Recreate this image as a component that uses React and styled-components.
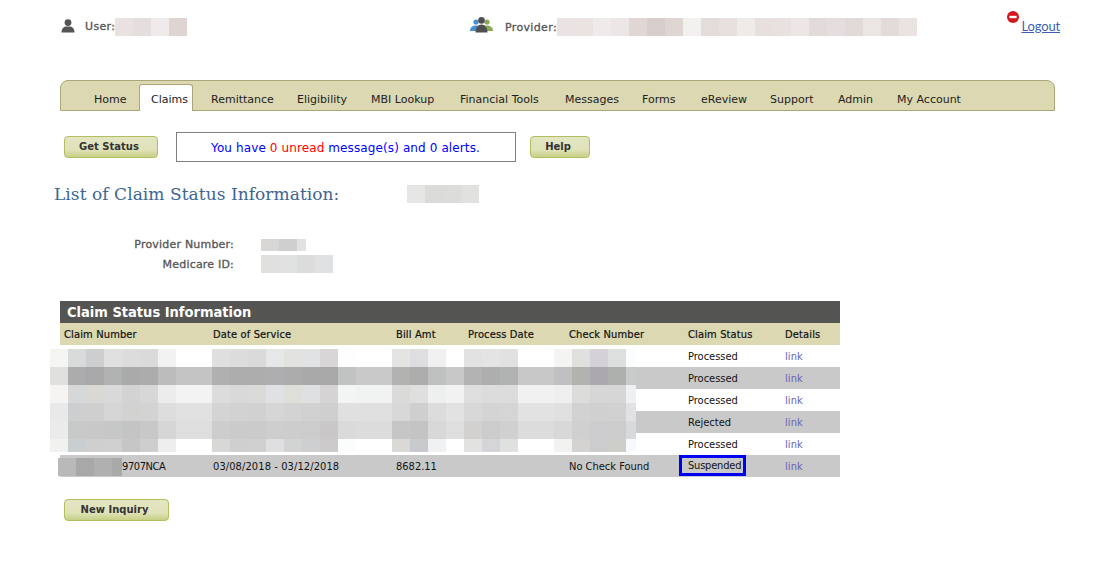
import React from "react";
import styled, { createGlobalStyle } from "styled-components";

const GlobalStyle = createGlobalStyle`
  html, body {
    margin: 0;
    padding: 0;
    background: #fff;
  }
  body {
    font-family: "DejaVu Sans", Verdana, sans-serif;
    font-size: 11px;
    color: #222;
  }
`;

const n = null;

const tabs = [
  { label: "Home", w: 57 },
  { label: "Claims", w: 54, active: true },
  { label: "Remittance", w: 86 },
  { label: "Eligibility", w: 74 },
  { label: "MBI Lookup", w: 89 },
  { label: "Financial Tools", w: 105 },
  { label: "Messages", w: 77 },
  { label: "Forms", w: 59 },
  { label: "eReview", w: 69 },
  { label: "Support", w: 68 },
  { label: "Admin", w: 59 },
  { label: "My Account", w: 90 },
];

const claims = [
  { status: "Processed" },
  { status: "Processed" },
  { status: "Processed" },
  { status: "Rejected" },
  { status: "Processed" },
  { number: "9707NCA", dates: "03/08/2018 - 03/12/2018", amount: "8682.11", check: "No Check Found", status: "Suspended", flagged: true },
];

const mosaicRows = [
  ["#f5f5f4", "#d9dbdb", "#cdcecf", "#e0e0e0", "#dcdcdc", "#dadada", "#f2f2f2", n, n, "#dfdfdf", "#dcdcdc", "#dadada", "#e6e7e9", "#e2e3de", "#e0e2e4", "#d8d6d7", "#fdfefd", n, n, "#e4e4e2", "#dedee0", "#f0f0f0", n, "#e2e2e2", "#e4e4e4", "#e0e1e0", n, n, "#f4f4f3", "#e0e0df", "#d4d2d8", "#dcdfde", "#fafcfe"],
  ["#e0e0df", "#acacac", "#a8a8aa", "#b0b2b1", "#aaaaaa", "#acacac", "#bcbcbc", "#c4c4c4", "#c4c4c4", "#b0b0b0", "#adadad", "#adadad", "#aeaeb0", "#acacad", "#a9a9aa", "#a9a9a9", "#c0c3c2", "#c9c9c9", "#c9c9c9", "#b2b2b0", "#adadad", "#bfc1c0", "#c8c8c8", "#b3b3b3", "#aeaeae", "#b1b3b2", "#c8c8c8", "#c8c8c8", "#c0c0c0", "#b2b2af", "#aba9ae", "#aeb0ae", "#c8cacc"],
  ["#f5f4f3", "#d5d7d9", "#d9d8d5", "#d9d9d9", "#d3d3d3", "#d7d7d7", "#ececec", "#f3f3f3", "#f3f3f3", "#dcdcdc", "#d9d9d9", "#dadad8", "#e0e1e3", "#dedfd9", "#dfe0e2", "#d5d3d4", "#f3f5f5", "#f1f2f2", "#f1f2f2", "#dadad9", "#dfdfe0", "#eeefef", "#f2f2f2", "#dedede", "#dcdcdc", "#dbdcdb", "#f1f1f1", "#f1f1f1", "#efefef", "#dcdcda", "#d6d6d6", "#d6d6d6", "#eef1f3"],
  ["#e9e9e9", "#cdced0", "#cfcfcf", "#d5d5d5", "#d2d2d1", "#d3d3d3", "#dddddd", "#e1e1e1", "#e1e1e1", "#d4d4d4", "#d2d2d2", "#d1d1d1", "#d6d6d6", "#d3d3d3", "#d1d1d1", "#cfcfcf", "#e0e0e0", "#e0e0e0", "#e0e0e0", "#d8d8d8", "#cfcfcf", "#dcdcdc", "#e2e2e2", "#d8d8d8", "#d4d4d4", "#d5d5d5", "#e2e2e2", "#e2e2e2", "#e0e0e0", "#d2d2d2", "#d0d0d0", "#d1d1d1", "#e2e2e4"],
  ["#ebebeb", "#c8cac9", "#c8c8c8", "#c5c8c6", "#c4c4c4", "#c8c8c8", "#d6d6d6", "#dedede", "#dedede", "#cdcdcd", "#cbcbcb", "#cbcbcb", "#cecece", "#cdcdcd", "#cccccc", "#c9c7c8", "#dadada", "#dcdcdc", "#dcdcdc", "#c6c6c6", "#c4c4c4", "#d8d8d8", "#dedede", "#d2d1cf", "#cccccc", "#d0d0d0", "#dcdcdc", "#dcdcdc", "#d8d8d8", "#d0d0d0", "#ccccce", "#cccccc", "#d8d9db"],
  ["#f1f1f0", "#c9ced0", "#cfcfcf", "#d0d0d0", "#c6c6c6", "#cecece", "#eeeeee", n, n, "#d8d8d6", "#cfcfcf", "#d0d0d0", "#dfdfe1", "#d2d4d3", "#cecfd0", "#cccaca", "#fbfdfc", n, n, "#dad9d6", "#c9cacd", "#f0f1f3", n, "#e2e2e0", "#d5d5d9", "#dfe1de", n, n, "#f2f2f1", "#d4d3d1", "#ccccce", "#cdcdc9", "#f6fafe"],
];

const Redact = ({ colors, height = 18, ...rest }) => (
  <RedactBox {...rest}>
    {colors.map((c, i) => (
      <RedactCell key={i} $bg={c} $h={height} />
    ))}
  </RedactBox>
);

const UserIcon = () => (
  <svg width="14" height="14" viewBox="0 0 14 14">
    <circle cx="7" cy="3.6" r="3.4" fill="#555" />
    <path d="M0.5 13.5 C0.5 9.5 3 8 4.5 7.6 L9.5 7.6 C11 8 13.5 9.5 13.5 13.5 Z" fill="#555" />
  </svg>
);

const GroupIcon = () => (
  <svg width="23" height="16" viewBox="0 0 23 16">
    <circle cx="6" cy="5" r="2.6" fill="#4a90d0" />
    <path d="M0 14 C0 10 3 8.5 6 8.5 C9 8.5 10 10 10 14 Z" fill="#4a90d0" />
    <circle cx="17" cy="5" r="2.6" fill="#8aaa55" />
    <path d="M13 14 C13 10 14 8.5 17 8.5 C20 8.5 23 10 23 14 Z" fill="#8aaa55" />
    <circle cx="11.5" cy="3.4" r="3.3" fill="#4f4f4f" />
    <path d="M5.5 15.5 C5.5 10.5 8 7.5 11.5 7.5 C15 7.5 17.5 10.5 17.5 15.5 Z" fill="#4f4f4f" />
  </svg>
);

const StopIcon = () => (
  <svg width="12" height="12" viewBox="0 0 12 12">
    <circle cx="6" cy="6" r="6" fill="#d3171d" />
    <rect x="2.4" y="4.8" width="7.2" height="2.4" fill="#fff" />
  </svg>
);

const App = () => (
  <Page>
    <GlobalStyle />
    <TopBar>
      <UserArea>
        <UserIcon />
        <UserLabel>User:</UserLabel>
        <Redact colors={["#e9e2e1", "#e5dede", "#eeebea", "#ded5d3"]} />
      </UserArea>
      <ProviderArea>
        <GroupIcon />
        <TopLabel>Provider:</TopLabel>
        <Redact colors={["#ebe3e3", "#ebe3e2", "#eeebea", "#ece7e6", "#e0d7d5", "#d8cfcd", "#dfd6d3", "#f2f1f0", "#e4dcdb", "#e8e0df", "#efebe9", "#e8e0df", "#e8e1e0", "#ece6e6", "#e3dbda", "#e6dede", "#e2dad8", "#ebe6e3", "#e3dada", "#ebe3e2"]} />
      </ProviderArea>
      <LogoutArea>
        <StopIcon />
        <LogoutLink href="#">Logout</LogoutLink>
      </LogoutArea>
    </TopBar>

    <NavBar>
      {tabs.map((t) => (
        <Tab key={t.label} $w={t.w} $active={t.active}>{t.label}</Tab>
      ))}
    </NavBar>

    <ActionRow>
      <Button $w={94}>Get Status</Button>
      <MessageBox>
        <span>You have <Red>0 unread</Red> message(s) and 0 alerts.</span>
      </MessageBox>
      <Button $w={60}>Help</Button>
    </ActionRow>

    <HeadingRow>
      <Heading>List of Claim Status Information:</Heading>
      <Redact colors={["#e6e6e5", "#dbdbda", "#dcdcdb", "#e1e1e0"]} />
    </HeadingRow>

    <InfoList>
      <InfoRow>
        <InfoLabel>Provider Number:</InfoLabel>
        <ShortRedact colors={["#d8d7d5", "#cfcfcf", "#e2e2e1"]} height={12} />
      </InfoRow>
      <InfoRow>
        <InfoLabel>Medicare ID:</InfoLabel>
        <Redact colors={["#e0e0df", "#e0e2e1", "#dcdcdc", "#e0e1e3"]} />
      </InfoRow>
    </InfoList>

    <TableWrap>
      <TableTitle>Claim Status Information</TableTitle>
      <Table>
        <colgroup>
          <col width="149" />
          <col width="183" />
          <col width="72" />
          <col width="101" />
          <col width="119" />
          <col width="97" />
          <col width="59" />
        </colgroup>
        <thead>
          <tr>
            <Th>Claim Number</Th>
            <Th>Date of Service</Th>
            <Th>Bill Amt</Th>
            <Th>Process Date</Th>
            <Th>Check Number</Th>
            <Th>Claim Status</Th>
            <Th>Details</Th>
          </tr>
        </thead>
        <tbody>
          {claims.map((c, i) => (
            <Row key={i} $alt={i % 2 === 1}>
              <Td $pad={c.number ? 62 : 4} $track={-0.4}>{c.number}</Td>
              <Td $track={0.1}>{c.dates}</Td>
              <Td>{c.amount}</Td>
              <Td />
              <Td>{c.check}</Td>
              <Td>{c.flagged ? <Flagged>{c.status}</Flagged> : c.status}</Td>
              <Td $track={0.1}><DetailLink href="#">link</DetailLink></Td>
            </Row>
          ))}
        </tbody>
      </Table>
      <MosaicGrid>
        {mosaicRows.flatMap((row, r) =>
          row.map((c, i) => <MosaicCell key={`${r}-${i}`} $bg={c} />)
        )}
      </MosaicGrid>
      <NumberRedact colors={["#b9b9b9", "#a8a8a8", "#b0b0b0", "#a8aaaa"]} />
    </TableWrap>

    <BottomRow>
      <Button $w={105}>New Inquiry</Button>
    </BottomRow>
  </Page>
);

export default App;

const condensed = `"DejaVu Sans Condensed", "DejaVu Sans", Verdana, sans-serif`;

const Page = styled.div`
  width: 1099px;
  height: 568px;
  overflow: hidden;
`;

const TopBar = styled.div`
  display: flex;
  align-items: flex-start;
  height: 80px;
  padding: 11px 39px 0 61px;
  box-sizing: border-box;
`;

const UserArea = styled.div`
  display: flex;
  align-items: center;
  width: 409px;
  margin-top: 7px;
  svg {
    margin: 0 10px 3px 0;
  }
`;

const ProviderArea = styled.div`
  display: flex;
  align-items: center;
  margin-top: 6px;
  svg {
    margin: 0 12px 4px 0;
  }
`;

const TopLabel = styled.span`
  font-size: 11px;
  letter-spacing: 0.35px;
  color: #555;
  -webkit-text-stroke: 0.3px #555;
`;

const UserLabel = styled(TopLabel)`
  padding-bottom: 2px;
`;

const RedactBox = styled.span`
  display: inline-flex;
  flex: none;
`;

const RedactCell = styled.span`
  display: block;
  flex: none;
  width: 18px;
  height: ${(p) => p.$h}px;
  background: ${(p) => p.$bg};
`;

const ShortRedact = styled(Redact)`
  width: 45px;
  overflow: hidden;
`;

const LogoutArea = styled.div`
  display: flex;
  align-items: flex-start;
  margin-left: auto;
`;

const LogoutLink = styled.a`
  margin: 7px 0 0 2px;
  font-family: Lato, sans-serif;
  font-size: 13px;
  letter-spacing: -0.15px;
  color: #3e5fb5;
`;

const NavBar = styled.div`
  display: flex;
  align-items: flex-end;
  width: 995px;
  height: 31px;
  margin-left: 60px;
  padding-left: 21px;
  box-sizing: border-box;
  background: #dbd8b2;
  border: 1px solid #a9a677;
  border-radius: 8px 8px 0 0;
`;

const Tab = styled.div`
  display: flex;
  align-items: center;
  flex: none;
  width: ${(p) => p.$w}px;
  height: ${(p) => (p.$active ? 27 : 24)}px;
  padding: ${(p) => (p.$active ? "2px 0 0 11px" : "2px 0 0 12px")};
  margin-right: ${(p) => (p.$active ? 6 : 0)}px;
  margin-bottom: ${(p) => (p.$active ? -1 : 0)}px;
  box-sizing: border-box;
  font-size: 11px;
  color: #222;
  background: ${(p) => (p.$active ? "#fff" : "transparent")};
  border: ${(p) => (p.$active ? "1px solid #a9a677" : "0")};
  border-bottom: 0;
  border-radius: 3px 3px 0 0;
  white-space: nowrap;
`;

const ActionRow = styled.div`
  display: flex;
  align-items: center;
  height: 30px;
  margin-top: 21px;
  padding-left: 64px;
`;

const Button = styled.button`
  width: ${(p) => p.$w}px;
  height: 22px;
  padding: 0 4px 1px 0;
  font-family: "DejaVu Sans", Verdana, sans-serif;
  font-size: 10px;
  font-weight: 700;
  color: #333;
  background: linear-gradient(#e4e5c3 0%, #e0e2b8 65%, #c6d085 100%);
  border: 1px solid #b2bf5e;
  border-radius: 4px;
`;

const MessageBox = styled.div`
  display: flex;
  align-items: center;
  justify-content: center;
  width: 340px;
  height: 30px;
  margin: 0 14px 0 18px;
  padding: 2px 1px 0 0;
  box-sizing: border-box;
  border: 1px solid #808080;
  font-size: 12px;
  letter-spacing: 0.11px;
  color: #0000ff;
  white-space: pre;
`;

const Red = styled.span`
  color: #ff0000;
`;

const HeadingRow = styled.div`
  display: flex;
  align-items: center;
  height: 26px;
  margin-top: 19px;
  padding-left: 54px;
`;

const Heading = styled.h1`
  width: 353px;
  flex: none;
  margin: 0;
  font-family: "DejaVu Serif", Georgia, serif;
  font-size: 17px;
  font-weight: 400;
  letter-spacing: 0.06px;
  color: #3d6691;
  white-space: nowrap;
`;

const InfoList = styled.div`
  display: flex;
  flex-direction: column;
  gap: 4px;
  margin-top: 31px;
`;

const InfoRow = styled.div`
  display: flex;
  align-items: center;
  min-height: 12px;
`;

const InfoLabel = styled.div`
  width: 234px;
  margin-right: 27px;
  text-align: right;
  font-size: 11px;
  letter-spacing: 0.2px;
  color: #555;
  -webkit-text-stroke: 0.3px #555;
`;

const TableWrap = styled.div`
  position: relative;
  width: 780px;
  margin: 28px 0 0 60px;
`;

const TableTitle = styled.div`
  height: 22px;
  padding-left: 7px;
  line-height: 22px;
  font-family: ${condensed};
  font-size: 14.5px;
  font-weight: 700;
  color: #fff;
  background: #545552;
`;

const Table = styled.table`
  width: 780px;
  table-layout: fixed;
  border-collapse: collapse;
  font-family: ${condensed};
`;

const Th = styled.th`
  height: 22px;
  padding: 0 0 0 4px;
  text-align: left;
  font-size: 11px;
  font-weight: 400;
  letter-spacing: 0.15px;
  color: #111;
  -webkit-text-stroke: 0.2px #111;
  background: #dbd8b2;
  white-space: nowrap;
`;

const Row = styled.tr`
  background: ${(p) => (p.$alt ? "#c9c9c9" : "#fff")};
`;

const Td = styled.td`
  height: 22px;
  padding: 0 0 0 ${(p) => p.$pad ?? 4}px;
  font-size: 11px;
  letter-spacing: ${(p) => p.$track ?? 0}px;
  color: #111;
  white-space: nowrap;
`;

const Flagged = styled.span`
  display: block;
  width: 67px;
  height: 21px;
  margin: -1px 0 0 -9px;
  padding-left: 6px;
  box-sizing: border-box;
  line-height: 16px;
  letter-spacing: -0.2px;
  border: 3px solid #0000f0;
`;

const DetailLink = styled.a`
  color: #6a63b5;
  text-decoration: none;
`;

const MosaicGrid = styled.div`
  position: absolute;
  left: -10px;
  top: 48px;
  display: grid;
  grid-template-columns: repeat(32, 18px) 10px;
  grid-template-rows: repeat(5, 18px) 13px;
`;

const MosaicCell = styled.div`
  background: ${(p) => p.$bg || "transparent"};
`;

const NumberRedact = styled(Redact)`
  position: absolute;
  left: -2px;
  top: 157px;
  width: 64px;
  overflow: hidden;
`;

const BottomRow = styled.div`
  margin-top: 22px;
  padding-left: 64px;
`;
